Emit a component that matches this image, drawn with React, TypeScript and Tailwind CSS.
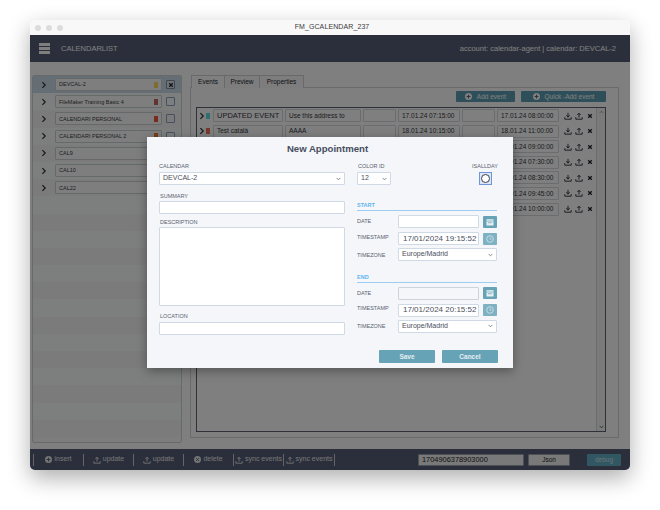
import React from "react";

const Chevron = ({ c = "#2a2f3a" }: { c?: string }) => (
  <svg width="6" height="8" viewBox="0 0 6 8" fill="none" className="shrink-0">
    <path d="M1.4 1.2 L4.2 4 L1.4 6.8" stroke={c} strokeWidth="1.2" />
  </svg>
);

const Tray = ({ up = false, c = "#2a2d36" }: { up?: boolean; c?: string }) => (
  <svg width="8" height="8" viewBox="0 0 8 8" fill="none" className="shrink-0">
    <path d="M0.8 5.2 V7.2 H7.2 V5.2" stroke={c} strokeWidth="0.9" />
    {up ? (
      <path d="M4 5.6 V1.4 M2.4 3 L4 1.2 L5.6 3" stroke={c} strokeWidth="0.9" />
    ) : (
      <path d="M4 0.8 V4.8 M2.4 3.2 L4 5.2 L5.6 3.2" stroke={c} strokeWidth="0.9" />
    )}
  </svg>
);

const Cross = () => (
  <svg width="6" height="6" viewBox="0 0 6 6" className="shrink-0">
    <path d="M1.2 1.2 L4.8 4.8 M4.8 1.2 L1.2 4.8" stroke="#22252e" strokeWidth="1.3" />
  </svg>
);

const CircleIcon = ({ kind, c }: { kind: "plus" | "x"; c: string }) => (
  <svg width="7" height="7" viewBox="0 0 8 8" className="shrink-0">
    <circle cx="4" cy="4" r="4" fill={c} />
    {kind === "plus" ? (
      <path d="M4 1.8 V6.2 M1.8 4 H6.2" stroke="#565f78" strokeWidth="1.1" />
    ) : (
      <path d="M2.5 2.5 L5.5 5.5 M5.5 2.5 L2.5 5.5" stroke="#565f78" strokeWidth="1.1" />
    )}
  </svg>
);

const Calendar = () => (
  <svg width="8" height="8" viewBox="0 0 8 8">
    <path d="M0.5 1.2 H7.5 V7.5 H0.5 Z" fill="#e6f0f3" />
    <path d="M0.5 3 H7.5 M2 4.7 H6" stroke="#67a3b6" strokeWidth="0.7" />
  </svg>
);

const Clock = () => (
  <svg width="8" height="8" viewBox="0 0 8 8" fill="none">
    <circle cx="4" cy="4" r="3.3" stroke="#d5e7ed" strokeWidth="0.8" />
    <path d="M4 2.2 V4.2 H5.6" stroke="#d5e7ed" strokeWidth="0.7" />
  </svg>
);

const Caret = () => (
  <svg width="5" height="4" viewBox="0 0 6 4" fill="none" className="shrink-0">
    <path d="M0.7 0.7 L3 3 L5.3 0.7" stroke="#5b6472" strokeWidth="0.9" />
  </svg>
);

const calendars = [
  { name: "DEVCAL-2", chip: "#ffd966", selected: true },
  { name: "FileMaker Training Basic 4", chip: "#c26a5e" },
  { name: "CALENDARI PERSONAL", chip: "#f0553c" },
  { name: "CALENDARI PERSONAL 2", chip: "#f57a28" },
  { name: "CAL9", chip: "#f0553c" },
  { name: "CAL10", chip: "#f0553c" },
  { name: "CAL22", chip: "#f0553c" },
];

const events = [
  { t: "UPDATED EVENT", d: "Use this address to", s: "17.01.24 07:15:00", e: "17.01.24 08:00:00", c: "#5fdede", big: true },
  { t: "Test català", d: "AAAA", s: "18.01.24 10:15:00", e: "18.01.24 11:00:00", c: "#f0705a" },
  { t: "Event 3", d: "", s: "19.01.24 08:00:00", e: "19.01.24 09:00:00", c: "#5fdede" },
  { t: "Event 4", d: "", s: "20.01.24 07:00:00", e: "20.01.24 07:30:00", c: "#5fdede" },
  { t: "Event 5", d: "", s: "21.01.24 08:00:00", e: "21.01.24 08:30:00", c: "#5fdede" },
  { t: "Event 6", d: "", s: "22.01.24 09:00:00", e: "22.01.24 09:45:00", c: "#5fdede" },
  { t: "Event 7", d: "", s: "23.01.24 09:15:00", e: "23.01.24 10:00:00", c: "#5fdede" },
];

const Field = ({ w, text, big }: { w: string; text?: string; big?: boolean }) => (
  <div className={`${w} h-[13px] shrink-0 border border-[#d6d9dc] rounded-[1px] px-[3px] flex items-center ${big ? "text-[7.5px]" : "text-[6.5px]"} text-[#33363c] whitespace-nowrap overflow-hidden`}>
    {text}
  </div>
);

const Label = ({ children, className = "" }: { children: React.ReactNode; className?: string }) => (
  <div className={`text-[5.5px] leading-[7px] text-[#5a6170] ${className}`}>{children}</div>
);

const inputBox = "h-[13px] bg-white border border-[#cfdae6] rounded-[1px]";

const SelectBox = ({ text, w }: { text: string; w: string }) => (
  <div className={`${w} ${inputBox} flex items-center justify-between px-[3px] text-[7px] text-[#474d5a]`}>
    <span>{text}</span>
    <Caret />
  </div>
);

const SquareBtn = ({ children, muted }: { children: React.ReactNode; muted?: boolean }) => (
  <div className={`w-[14px] h-[12px] rounded-[1px] flex items-center justify-center ${muted ? "bg-[#7eb1c2]" : "bg-[#67a3b6]"}`}>
    {children}
  </div>
);

const DateBlock = ({ title, stamp, greyDate, lineMt }: { title: string; stamp: string; greyDate?: boolean; lineMt: string }) => (
  <div className={lineMt}>
    <div className="text-[5.5px] leading-[7px] font-bold text-[#64b5f0]">{title}</div>
    <div className="mt-[1px] h-px w-[140px] bg-[#9fcdf2]" />
    <div className="mt-[4px] flex items-center h-[13px]">
      <Label className="w-[41px]">DATE</Label>
      <div className={`w-[81px] h-[13px] rounded-[1px] border ${greyDate ? "bg-[#f4f6f9] border-[#ccd3da]" : "bg-white border-[#cfdae6]"}`} />
      <div className="ml-[4px]"><SquareBtn><Calendar /></SquareBtn></div>
    </div>
    <div className="mt-[4px] flex items-center h-[13px]">
      <Label className="w-[41px] -mt-[3px]">TIMESTAMP</Label>
      <div className={`w-[81px] ${inputBox} flex items-center px-[4px] text-[8px] text-[#4a505c] whitespace-nowrap`}>{stamp}</div>
      <div className="ml-[4px]"><SquareBtn muted><Clock /></SquareBtn></div>
    </div>
    <div className="mt-[3px] flex items-center h-[13px]">
      <Label className="w-[41px] mt-[1px]">TIMEZONE</Label>
      <SelectBox text="Europe/Madrid" w="w-[99px]" />
    </div>
  </div>
);

const FootItem = ({ w, children }: { w: string; children: React.ReactNode }) => (
  <div className={`${w} h-[12px] border-r border-[#c6cad2] flex items-center justify-center gap-[2px] text-[7px] text-[#e8e8e8] whitespace-nowrap`}>
    {children}
  </div>
);

export default function App() {
  return (
    <div className="w-[660px] h-[510px] bg-white pt-[20px] pl-[30px] overflow-hidden" style={{ fontFamily: '"Liberation Sans", Arial, sans-serif' }}>
      <div className="relative w-[600px] h-[450px] rounded-[5px] overflow-hidden shadow-[0_8px_22px_rgba(0,0,0,0.32)] flex flex-col bg-white">
        {/* title bar */}
        <div className="h-[15px] shrink-0 bg-[#f8f8f8] flex items-center relative">
          <div className="flex gap-[5px] pl-[5px]">
            <span className="w-[6px] h-[6px] rounded-full bg-[#dcdcdc]" />
            <span className="w-[6px] h-[6px] rounded-full bg-[#dcdcdc]" />
            <span className="w-[6px] h-[6px] rounded-full bg-[#dcdcdc]" />
          </div>
          <div className="flex-1 text-center text-[7px] text-[#3a3a3a] pr-[29px] tracking-[0.1px]">FM_GCALENDAR_237</div>
        </div>

        {/* header */}
        <div className="h-[27px] shrink-0 bg-[#565f78] flex items-center pl-[9px] pr-[14px]">
          <div className="w-[11px] flex flex-col gap-[1.5px]">
            <span className="h-[2.5px] bg-white" />
            <span className="h-[2.5px] bg-white" />
            <span className="h-[2.5px] bg-white" />
          </div>
          <div className="ml-[11px] text-[7.5px] text-white">CALENDARLIST</div>
          <div className="ml-auto text-[7.5px] text-white">account: calendar-agent | calendar: DEVCAL-2</div>
        </div>

        {/* content */}
        <div className="flex-1 bg-[#ffffff] flex pt-[13px] pl-[2px]">
          {/* left panel */}
          <div className="w-[150px] h-[368px] border border-[#ccd4d6] rounded-[2px] bg-[#fafbfb] flex flex-col overflow-hidden">
            {Array.from({ length: 21 }).map((_, i) => {
              const c = calendars[i];
              return (
                <div key={i} className={`h-[17.2px] shrink-0 flex items-center pl-[8px] ${c?.selected ? "bg-[#cddcea]" : i % 2 ? "bg-[#fbfcfc]" : "bg-[#f6f7f7]"}`}>
                  {c && (
                    <>
                      <Chevron />
                      <div className="ml-[8px] w-[107px] h-[13px] border border-[#ccd2d4] bg-[#fdfdfd] rounded-[1px] flex items-center pl-[3px] pr-[3px] text-[5.5px] text-[#3b3e44]">
                        <span className="flex-1 whitespace-nowrap">{c.name}</span>
                        <span className="w-[4px] h-[6px]" style={{ backgroundColor: c.chip }} />
                      </div>
                      <div className={`ml-[4px] w-[9px] h-[9px] border rounded-[1px] flex items-center justify-center ${c.selected ? "border-[#7c8ca0] bg-[#dfe6ee]" : "border-[#8aa3c0]"}`}>
                        {c.selected && <Cross />}
                      </div>
                    </>
                  )}
                </div>
              );
            })}
          </div>

          {/* right panel */}
          <div className="ml-[8px] w-[429px] flex flex-col h-[363px]">
            <div className="flex h-[13px] shrink-0 pl-[1px] text-[6.5px] text-[#22252b] relative">
              <div className="w-[34px] h-[13px] border border-b-0 border-[#cfd3d6] bg-white flex items-center justify-center">Events</div>
              <div className="w-[35px] h-[13px] border-t border-r border-[#cfd3d6] bg-[#fafafa] flex items-center justify-center">Preview</div>
              <div className="w-[44px] h-[13px] border-t border-r border-[#cfd3d6] bg-[#fafafa] flex items-center justify-center">Properties</div>
            </div>
            <div className="flex-1 -mt-px border border-[#d2d6d8] bg-white flex flex-col pl-[5px] pt-[3px] pr-[12px]">
              <div className="flex justify-end gap-[6px] h-[11px] shrink-0">
                <div className="w-[59px] h-[11px] rounded-[1px] bg-[#5d9fb3] flex items-center justify-center gap-[5px] text-[6.5px] text-white">
                  <CircleIcon kind="plus" c="#ffffff" />
                  Add event
                </div>
                <div className="w-[85px] h-[11px] rounded-[1px] bg-[#5d9fb3] flex items-center justify-center gap-[5px] text-[6.5px] text-white">
                  <CircleIcon kind="plus" c="#ffffff" />
                  Quick -Add event
                </div>
              </div>
              <div className="mt-[5px] flex-1 border border-[#5e6272] flex min-h-0 mb-[5px]">
                <div className="flex-1 flex flex-col pl-[2px] pt-[1px]">
                  {events.map((ev, i) => (
                    <div key={i} className="h-[15.6px] shrink-0 flex items-start">
                      <div className="h-[13px] flex items-center shrink-0">
                        <Chevron />
                        <span className="ml-[1px] w-[4px] h-[6px]" style={{ backgroundColor: ev.c }} />
                      </div>
                      <div className="ml-[3px] flex gap-[2px]">
                        <Field w="w-[70px]" text={ev.t} big={ev.big} />
                        <Field w="w-[76px]" text={ev.d} />
                        <Field w="w-[33px]" />
                        <Field w="w-[62px]" text={ev.s} />
                        <Field w="w-[33px]" />
                        <Field w="w-[62px]" text={ev.e} />
                      </div>
                      <div className="h-[13px] ml-[5px] flex items-center gap-[3px]">
                        <Tray />
                        <Tray up />
                        <span className="ml-[1px]"><Cross /></span>
                      </div>
                    </div>
                  ))}
                </div>
                <div className="w-[9px] shrink-0 bg-[#f5f5f5] border-l border-[#d8d8d8] flex flex-col justify-between items-center py-[2px]">
                  <svg width="5" height="4" viewBox="0 0 6 4" fill="none"><path d="M0.7 3.3 L3 1 L5.3 3.3" stroke="#8a8a8a" strokeWidth="0.9" /></svg>
                  <svg width="5" height="4" viewBox="0 0 6 4" fill="none"><path d="M0.7 0.7 L3 3 L5.3 0.7" stroke="#444" strokeWidth="0.9" /></svg>
                </div>
              </div>
            </div>
          </div>
        </div>

        {/* footer */}
        <div className="h-[21px] shrink-0 bg-[#565f78] flex items-center pl-[3px] relative">
          <div className="h-[12px] border-l border-[#c6cad2]" />
          <FootItem w="w-[50px]"><CircleIcon kind="plus" c="#e8e8e8" />insert</FootItem>
          <FootItem w="w-[50px]"><Tray up c="#e8e8e8" />update</FootItem>
          <FootItem w="w-[50px]"><Tray up c="#e8e8e8" />update</FootItem>
          <FootItem w="w-[50px]"><CircleIcon kind="x" c="#e8e8e8" />delete</FootItem>
          <FootItem w="w-[50px]"><Tray up c="#e8e8e8" />sync events</FootItem>
          <FootItem w="w-[51px]"><Tray up c="#e8e8e8" />sync events</FootItem>
          <div className="ml-[83px] w-[106px] h-[12px] rounded-[1px] bg-[#f3f3f3] border border-[#9aa0a8] flex items-center px-[3px] text-[7.4px] text-[#222]">1704906378903000</div>
          <div className="ml-[4px] w-[42px] h-[12px] rounded-[1px] bg-[#f3f3f3] border border-[#9aa0a8] flex items-center justify-center text-[6.5px] text-[#222]">Json</div>
          <div className="ml-[17px] w-[34px] h-[12px] rounded-[1px] bg-[#62b0c4] flex items-center justify-center text-[6.5px] text-[#cfe3ea]">debug</div>
        </div>

        {/* dimming overlay + modal */}
        <div className="absolute left-0 right-0 top-[15px] bottom-0 bg-black/50" />
        <div className="absolute left-[117px] top-[117px] w-[366px] h-[231px] bg-[#f4f6f9] shadow-[0_3px_10px_rgba(0,0,0,0.35)] flex flex-col">
          <div className="h-[23px] pt-[6px] pr-[5px] text-center text-[9.6px] leading-[12px] font-bold text-[#474e61]">New Appointment</div>
          <div className="flex pl-[12px] pt-[3px]">
            <div className="w-[186px]">
              <Label>CALENDAR</Label>
              <div className="mt-[2px]"><SelectBox text="DEVCAL-2" w="w-[186px]" /></div>
              <Label className="mt-[8px] ml-[1px]">SUMMARY</Label>
              <div className={`mt-[1px] w-full ${inputBox}`} />
              <Label className="mt-[5px] ml-[1px]">DESCRIPTION</Label>
              <div className="mt-[1px] w-full h-[79px] bg-white border border-[#cfdae6] rounded-[1px]" />
              <Label className="mt-[7px] ml-[1px]">LOCATION</Label>
              <div className={`mt-[2px] w-full ${inputBox}`} />
            </div>
            <div className="ml-[12px] w-[141px]">
              <div className="flex">
                <div className="w-[115px]">
                  <Label className="ml-[1px]">COLOR ID</Label>
                  <div className="mt-[2px]"><SelectBox text="12" w="w-[34px]" /></div>
                </div>
                <div className="w-[26px] flex flex-col items-center">
                  <Label>ISALLDAY</Label>
                  <div className="mt-[2px] w-[13px] h-[13px] border border-[#6f97d8] bg-[#dbe5f5] flex items-center justify-center">
                    <span className="w-[9px] h-[9px] rounded-full border border-[#3a3f4b] bg-white" />
                  </div>
                </div>
              </div>
              <DateBlock title="START" stamp="17/01/2024 19:15:52" lineMt="mt-[17px]" />
              <DateBlock title="END" stamp="17/01/2024 20:15:52" greyDate lineMt="mt-[12.5px]" />
            </div>
          </div>
          <div className="flex justify-end gap-[7px] pr-[15px] mt-[15px]">
            <div className="w-[56px] h-[13px] rounded-[1px] bg-[#67a3b6] flex items-center justify-center text-[6.5px] font-bold text-[#e4eff3]">Save</div>
            <div className="w-[56px] h-[13px] rounded-[1px] bg-[#67a3b6] flex items-center justify-center text-[6.5px] font-bold text-[#e4eff3]">Cancel</div>
          </div>
        </div>
      </div>
    </div>
  );
}
